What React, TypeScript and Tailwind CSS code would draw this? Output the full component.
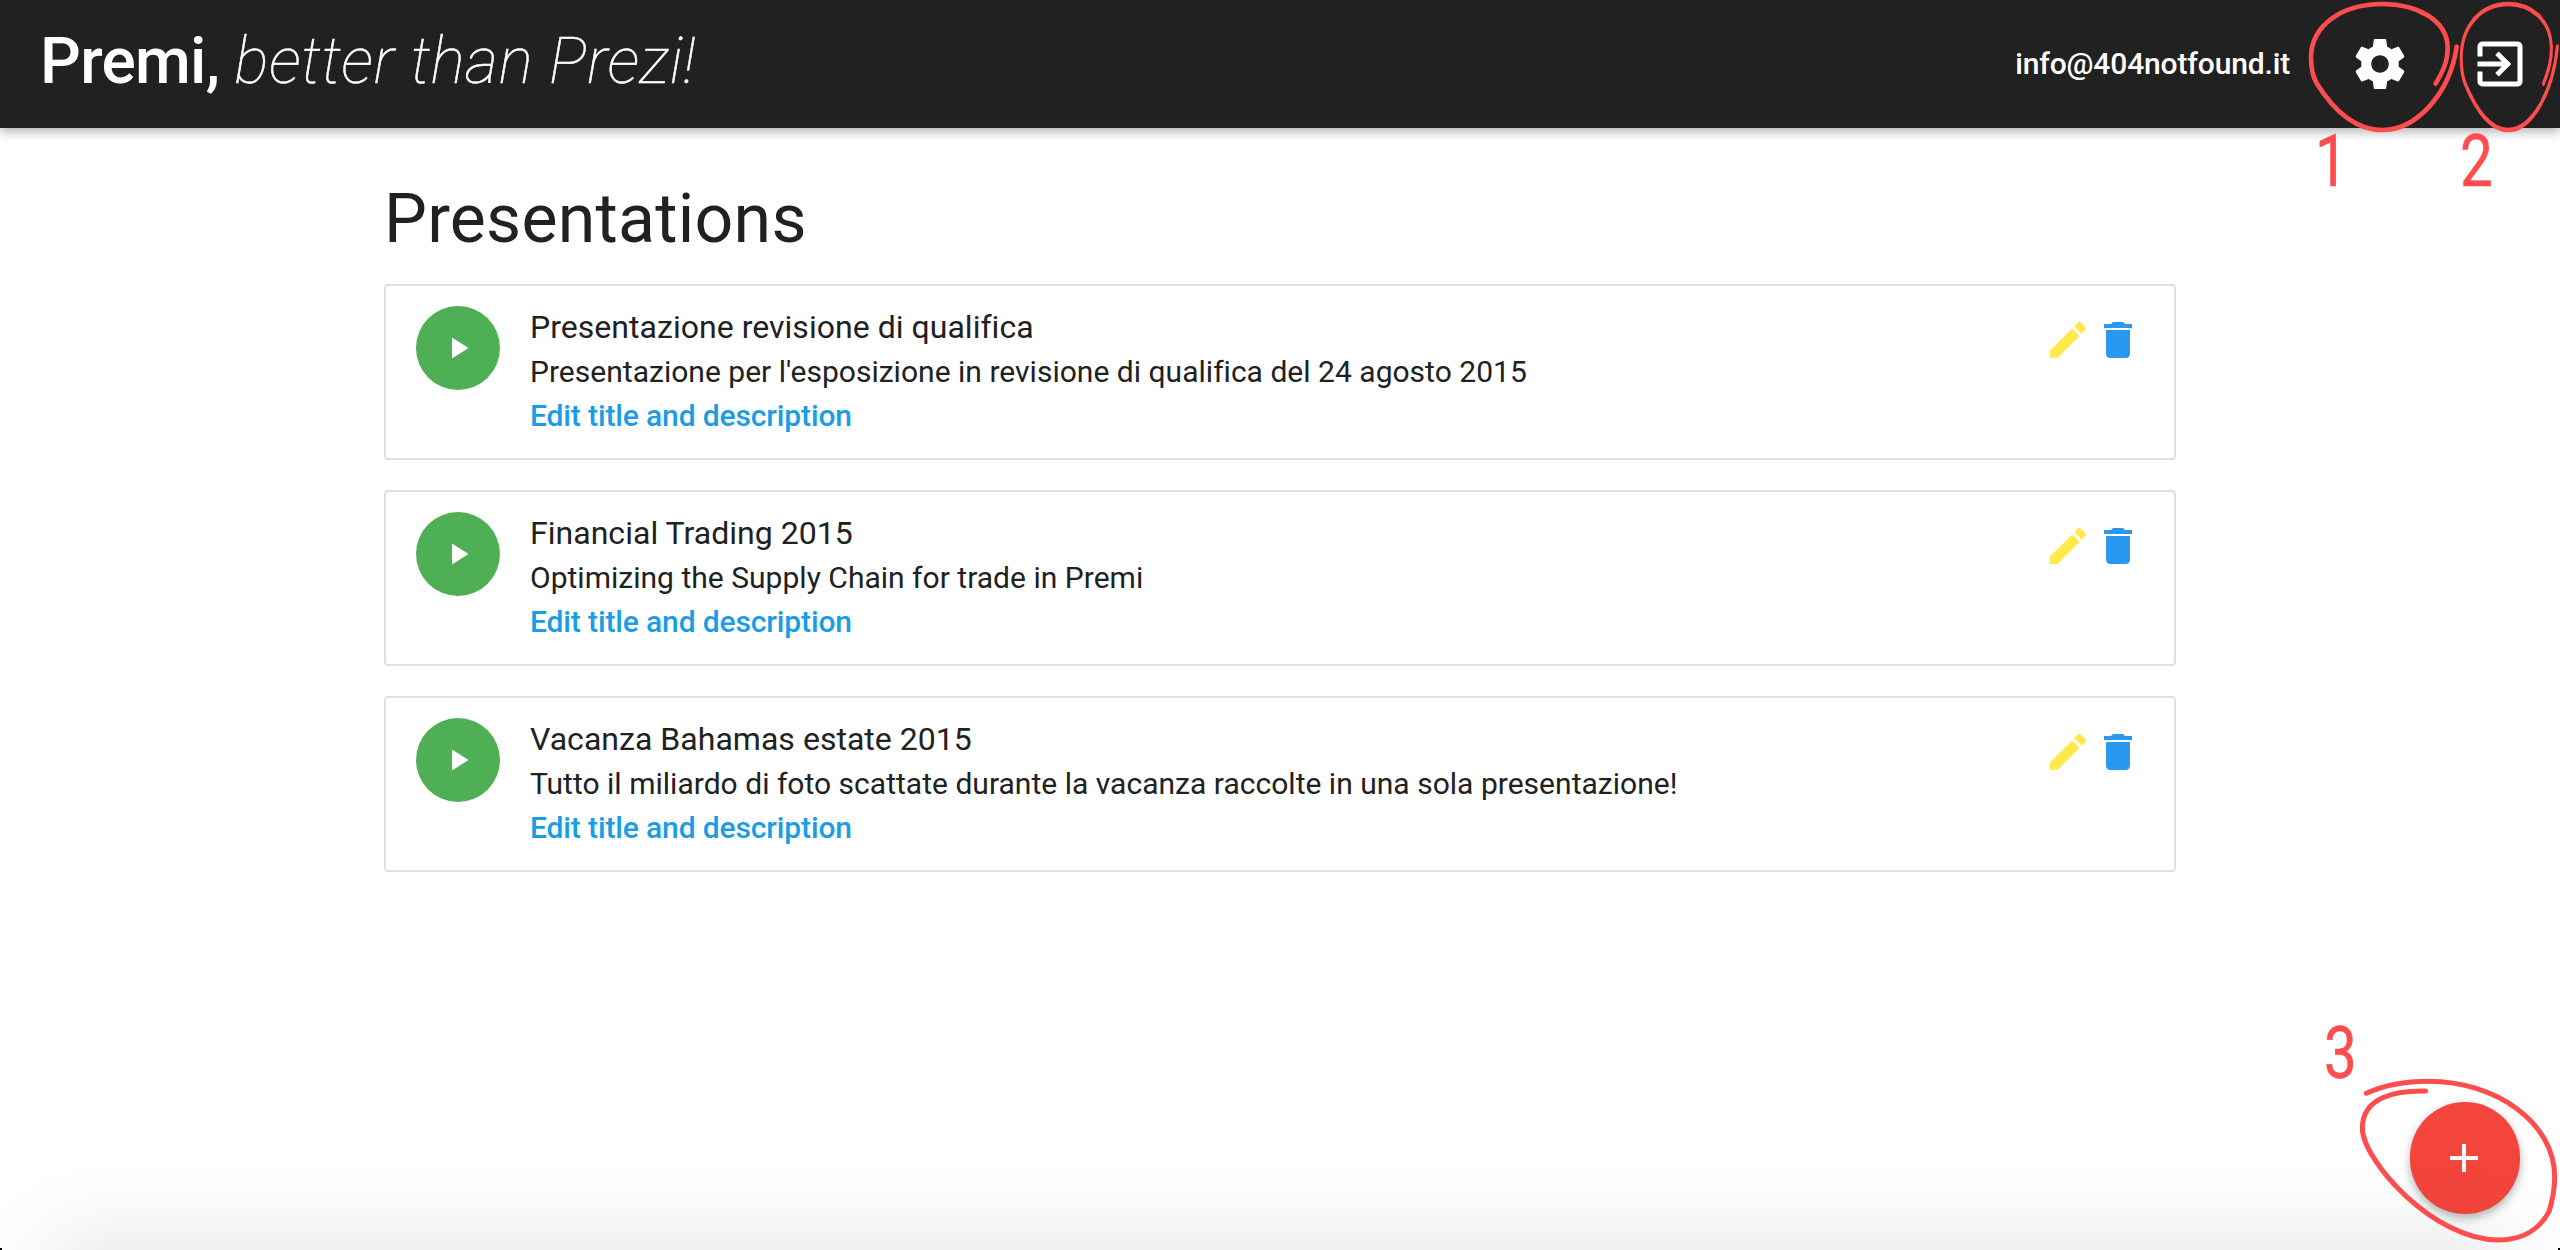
import { MdAdd, MdDelete, MdEdit, MdExitToApp, MdPlayArrow } from "react-icons/md";

const presentations = [
  {
    title: "Presentazione revisione di qualifica",
    description: "Presentazione per l'esposizione in revisione di qualifica del 24 agosto 2015",
  },
  {
    title: "Financial Trading 2015",
    description: "Optimizing the Supply Chain for trade in Premi",
  },
  {
    title: "Vacanza Bahamas estate 2015",
    description:
      "Tutto il miliardo di foto scattate durante la vacanza raccolte in una sola presentazione!",
  },
];

function GearIcon() {
  return (
    <svg viewBox="0 0 24 24" className="size-[60px]" fill="currentColor">
      <path d="M19.43 12.98c.04-.32.07-.64.07-.98s-.03-.66-.07-.98l2.11-1.65c.19-.15.24-.42.12-.64l-2-3.46c-.12-.22-.39-.3-.61-.22l-2.49 1c-.52-.4-1.08-.73-1.69-.98l-.38-2.65C14.46 2.18 14.25 2 14 2h-4c-.25 0-.46.18-.49.42l-.38 2.65c-.61.25-1.17.59-1.69.98l-2.49-1c-.23-.09-.49 0-.61.22l-2 3.46c-.13.22-.07.49.12.64l2.11 1.65c-.04.32-.07.65-.07.98s.03.66.07.98l-2.11 1.65c-.19.15-.24.42-.12.64l2 3.46c.12.22.39.3.61.22l2.49-1c.52.4 1.08.73 1.69.98l.38 2.65c.03.24.24.42.49.42h4c.25 0 .46-.18.49-.42l.38-2.65c.61-.25 1.17-.59 1.69-.98l2.49 1c.23.09.49 0 .61-.22l2-3.46c.12-.22.07-.49-.12-.64l-2.11-1.65zM12 15.5c-1.93 0-3.5-1.57-3.5-3.5s1.57-3.5 3.5-3.5 3.5 1.57 3.5 3.5-1.57 3.5-3.5 3.5z" />
    </svg>
  );
}

function Header() {
  return (
    <header className="flex h-32 shrink-0 items-center bg-[#212121] pl-10 pr-[30px] text-white shadow-[0_4px_10px_rgba(0,0,0,0.3)]">
      <h1 className="-mt-1 whitespace-nowrap text-[64px] leading-none font-medium tracking-[-0.7px]">
        Premi,{" "}
        <span className="font-thin tracking-[0.6px] italic [-webkit-text-stroke:0.5px_white]">
          better than Prezi!
        </span>
      </h1>
      <span className="ml-auto text-[30px] leading-none font-medium tracking-[-0.15px]">
        info@404notfound.it
      </span>
      <button className="ml-[60px]" aria-label="Settings">
        <GearIcon />
      </button>
      <button className="ml-[60px]" aria-label="Log out">
        <MdExitToApp className="size-[60px]" />
      </button>
    </header>
  );
}

function PresentationCard({ title, description }: { title: string; description: string }) {
  return (
    <li className="flex h-44 items-start rounded border-2 border-[#e0e0e0] pt-5 pr-8 pl-[30px]">
      <button
        className="flex size-[84px] shrink-0 items-center justify-center rounded-full bg-[#4faf55] text-white"
        aria-label="Play"
      >
        <MdPlayArrow className="size-9" />
      </button>
      <div className="ml-[30px] flex-1 whitespace-nowrap">
        <h3 className="-mt-px mb-px text-[32px] leading-[44px] tracking-[0.03px]">{title}</h3>
        <p className="text-[30px] leading-[44px] tracking-[0.02px]">{description}</p>
        <a className="block text-[30px] leading-[44px] font-medium tracking-[-0.13px] text-[#1a9de5]">
          Edit title and description
        </a>
      </div>
      <div className="mt-2.5 flex gap-0.5">
        <MdEdit className="size-12 text-[#ffe94d]" />
        <MdDelete className="size-12 text-[#2b98f0]" />
      </div>
    </li>
  );
}

const LOOP =
  "M437 251 C458 215 474 185 473 140 C470 60 380 12 278 12 C150 12 64 80 63 172 C63 200 68 228 79 248 C130 330 195 390 277 390 C380 390 480 280 500 140";

function Annotations() {
  return (
    <div className="pointer-events-none absolute inset-0 text-[73px] leading-none text-[#ff4c4c] [-webkit-text-stroke:0.5px_#ff4c4c]">
      <svg
        viewBox="0 0 810 600"
        className="absolute top-0 right-0 h-[200px] w-[270px]"
        fill="none"
        stroke="#ff4c4c"
        strokeWidth="14"
        strokeLinecap="round"
      >
        <path d={LOOP} />
        <path d={LOOP} transform="translate(472 0) scale(0.66 1)" />
      </svg>
      <svg
        viewBox="0 0 750 720"
        className="absolute right-0 bottom-0 h-[240px] w-[250px]"
        fill="none"
        stroke="#ff4c4c"
        strokeWidth="15"
        strokeLinecap="round"
      >
        <path d="M347 243 C260 241 157 260 157 355 C157 450 370 690 565 690 C640 690 690 655 717 605 C728 570 734 540 734 500 C734 340 560 214 355 214 C280 214 220 227 169 250" />
      </svg>
      <span className="absolute top-[125px] left-[2315px] origin-left scale-x-80">1</span>
      <span className="absolute top-[125px] left-[2460px] origin-left scale-x-80">2</span>
      <span className="absolute top-[1017px] left-[2324px] origin-left scale-x-80">3</span>
    </div>
  );
}

export default function App() {
  return (
    <div className="relative flex h-[1250px] w-[2560px] flex-col overflow-hidden bg-white font-['Roboto',sans-serif] text-[#212121]">
      <Header />
      <main className="mx-auto w-[1792px] pt-[51px]">
        <h2 className="text-[68px] leading-[80px] tracking-[0.25px]">Presentations</h2>
        <ul className="mt-[25px] flex flex-col gap-[30px]">
          {presentations.map((p) => (
            <PresentationCard key={p.title} {...p} />
          ))}
        </ul>
      </main>
      <button
        className="absolute right-10 bottom-9 flex h-28 w-[110px] items-center justify-center rounded-full bg-[#f4453d] text-white shadow-[0_4px_10px_rgba(0,0,0,0.3)]"
        aria-label="Add presentation"
      >
        <MdAdd className="-ml-0.5 size-12" />
      </button>
      <div className="pointer-events-none absolute inset-x-[60px] top-full h-20 shadow-[0_0_90px_10px_rgba(0,0,0,0.11)]" />
      <div className="absolute bottom-0 left-0 size-0.5 bg-black" />
      <div className="absolute right-0 bottom-0 size-0.5 bg-black" />
      <Annotations />
    </div>
  );
}
